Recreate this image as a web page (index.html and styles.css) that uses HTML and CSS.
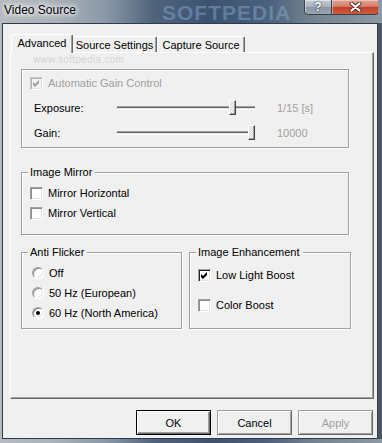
FILE: index.html
```html
<!DOCTYPE html>
<html>
<head>
<meta charset="utf-8">
<title>Video Source</title>
<link rel="stylesheet" href="styles.css">
</head>
<body>
<div class="window">
  <div class="titlebar">
    <span class="title">Video Source</span>
    <span class="wm-title">SOFTPEDIA</span>
    <div class="caption">
      <div class="cap-btn cap-help">?</div>
      <div class="cap-btn cap-close">
        <svg width="13" height="10" viewBox="0 0 13 10"><path d="M2.5 1.5 L10.5 8.5 M10.5 1.5 L2.5 8.5" stroke="#4a2a24" stroke-width="4" stroke-linecap="round" fill="none"/><path d="M2.5 1.5 L10.5 8.5 M10.5 1.5 L2.5 8.5" stroke="#fff" stroke-width="2.2" stroke-linecap="round" fill="none"/></svg>
      </div>
    </div>
  </div>
  <div class="client">
    <div class="tabs">
      <div class="tab tab-adv active">Advanced</div>
      <div class="tab tab-src">Source Settings</div>
      <div class="tab tab-cap">Capture Source</div>
    </div>
    <div class="panel">
      <span class="wm-url">www.softpedia.com</span>
      <div class="group g-gain">
        <div class="check-row disabled">
          <span class="cb disabled"><svg width="11" height="11" viewBox="0 0 11 11"><path d="M2 4 L4 6 L8 2 L8 5 L4 9 L2 7 Z" fill="#a0a0a0"/></svg></span>
          <span>Automatic Gain Control</span>
        </div>
        <div class="slider-row">
          <span class="s-label">Exposure:</span>
          <div class="slider"><div class="track"></div><div class="thumb" style="left:112px"></div></div>
          <span class="s-value">1/15 [s]</span>
        </div>
        <div class="slider-row">
          <span class="s-label">Gain:</span>
          <div class="slider"><div class="track"></div><div class="thumb" style="left:131px"></div></div>
          <span class="s-value">10000</span>
        </div>
      </div>
      <div class="group g-mirror">
        <span class="legend">Image Mirror</span>
        <div class="check-row first"><span class="cb"></span><span>Mirror Horizontal</span></div>
        <div class="check-row second"><span class="cb"></span><span>Mirror Vertical</span></div>
      </div>
      <div class="group-row">
        <div class="group g-flicker">
          <span class="legend">Anti Flicker</span>
          <div class="radio-row"><span class="rb"></span><span>Off</span></div>
          <div class="radio-row"><span class="rb"></span><span>50 Hz (European)</span></div>
          <div class="radio-row"><span class="rb on"></span><span>60 Hz (North America)</span></div>
        </div>
        <div class="group g-enh">
          <span class="legend">Image Enhancement</span>
          <div class="check-row first"><span class="cb checked"><svg width="11" height="11" viewBox="0 0 11 11"><path d="M2 4 L4 6 L8 2 L8 5 L4 9 L2 7 Z" fill="#000"/></svg></span><span>Low Light Boost</span></div>
          <div class="check-row second"><span class="cb"></span><span>Color Boost</span></div>
        </div>
      </div>
    </div>
    <div class="buttons">
      <div class="btn default">OK</div>
      <div class="btn">Cancel</div>
      <div class="btn disabled">Apply</div>
    </div>
  </div>
</div>
</body>
</html>
```

FILE: styles.css
```css
* { box-sizing: border-box; }
html, body { margin: 0; padding: 0; }
body {
  width: 382px;
  height: 443px;
  overflow: hidden;
  font-family: "Liberation Sans", Arial, sans-serif;
  font-size: 11px;
  color: #000;
}

.window {
  width: 382px;
  height: 443px;
  display: flex;
  flex-direction: column;
  padding: 0 4px 4px 2px;
  background: linear-gradient(90deg, #b6bbc0 0%, #aab1b8 14%, #8998a7 28%, #50637b 40%, #3c5370 55%, #4a617b 70%, #74838f 82%, #8d99a5 100%);
}

/* title bar */
.titlebar {
  height: 23px;
  flex: none;
  display: flex;
  align-items: flex-start;
  position: relative;
  overflow: hidden;
}
.title {
  margin: 3px 0 0 2px;
  font-size: 12px;
  line-height: 14px;
  color: #000;
  text-shadow: 0 0 4px #fff, 0 0 6px #fff, 0 0 8px rgba(255,255,255,.8);
  position: relative;
  z-index: 1;
}
.wm-title {
  position: absolute;
  left: 160px;
  top: 2px;
  font-size: 21px;
  font-weight: bold;
  letter-spacing: 1px;
  line-height: 21px;
  color: rgba(140, 175, 215, 0.45);
}
.caption {
  margin-left: auto;
  margin-right: -1px;
  margin-top: -1px;
  display: flex;
  position: relative;
  z-index: 1;
}
.cap-btn {
  height: 16px;
  display: flex;
  align-items: center;
  justify-content: center;
  border: 1px solid #36404c;
}
.cap-help {
  width: 28px;
  border-radius: 0 0 0 4px;
  background: linear-gradient(#c3cad2 0%, #a8b2bd 48%, #8b97a5 52%, #9aa6b3 100%);
  box-shadow: inset 1px 1px 0 rgba(255,255,255,.5);
  color: #fff;
  font-weight: bold;
  font-size: 12px;
  text-shadow: 0 0 2px #2a3440, 0 0 1px #2a3440;
}
.cap-close {
  width: 47px;
  border-left: none;
  border-radius: 0 0 4px 0;
  background: linear-gradient(#e4a393 0%, #d6806d 45%, #c2412d 52%, #d05a3c 100%);
  box-shadow: inset 1px 1px 0 rgba(255,255,255,.35);
}

/* client */
.client {
  flex: 1;
  display: flex;
  flex-direction: column;
  background: #f0f0f0;
  border: 1px solid #2d3b4b;
  padding: 10px 3px 3px 7px;
  position: relative;
  overflow: hidden;
  box-shadow: 4px 0 0 #4b5666;
}

/* tabs */
.tabs {
  display: flex;
  align-items: flex-end;
  height: 18px;
  padding-left: 1px;
  flex: none;
}
.tab {
  height: 16px;
  display: flex;
  align-items: center;
  justify-content: center;
  border-top: 1px solid #fff;
  border-left: 1px solid #fff;
  border-right: 1px solid #696969;
  box-shadow: inset -1px 0 0 #a0a0a0;
  border-radius: 2px 2px 0 0;
  background: #f0f0f0;
  white-space: nowrap;
  padding-top: 1px;
}
.tab.active {
  height: 19px;
  margin-bottom: -1px;
  position: relative;
  z-index: 1;
  padding-top: 0;
  padding-bottom: 2px;
}
.tab-adv { width: 62px; }
.tab-src { width: 84px; border-left: none; }
.tab-cap { width: 88px; }

/* panel */
.panel {
  height: 347px;
  flex: none;
  position: relative;
  border-top: 1px solid #fff;
  border-left: 1px solid #fff;
  border-right: 1px solid #696969;
  border-bottom: 1px solid #696969;
  box-shadow: inset -1px -1px 0 #a0a0a0;
  padding: 16px 0 0 10px;
}
.wm-url {
  position: absolute;
  left: 22px;
  top: 1px;
  font-size: 10px;
  letter-spacing: 0.3px;
  color: #d4d4d4;
}

/* group boxes */
.group {
  border: 1px solid #a0a0a0;
  box-shadow: 1px 1px 0 #fff, inset 1px 1px 0 #fff;
  display: flex;
  flex-direction: column;
  align-items: flex-start;
}
.legend {
  margin: -7px 0 0 6px;
  padding: 0 3px 0 2px;
  background: #f0f0f0;
  line-height: 13px;
}
.g-gain { width: 328px; height: 79px; }
.g-mirror { width: 328px; height: 63px; margin-top: 24px; }
.group-row { display: flex; margin-top: 17px; }
.g-flicker { width: 161px; height: 77px; }
.g-enh { width: 162px; height: 77px; margin-left: 7px; }

/* check boxes */
.check-row {
  display: flex;
  align-items: center;
  height: 13px;
  line-height: 13px;
  gap: 5px;
  white-space: nowrap;
}
.g-gain .check-row { margin: 7px 0 0 8px; }
.check-row.disabled { color: #a0a0a0; }
.g-mirror .check-row.first { margin: 8px 0 0 8px; }
.g-mirror .check-row.second { margin: 7px 0 0 8px; }
.g-enh .check-row.first { margin: 10px 0 0 8px; }
.g-enh .check-row.second { margin: 17px 0 0 8px; }

.cb {
  width: 13px;
  height: 13px;
  flex: none;
  display: flex;
  background: #fff;
  border: 1px solid;
  border-color: #a0a0a0 #fff #fff #a0a0a0;
  box-shadow: inset 1px 1px 0 #8c8c8c, inset -1px -1px 0 #e3e3e3;
}
.cb.checked { box-shadow: inset 1px 1px 0 #202020, inset -1px -1px 0 #e3e3e3; }
.cb.disabled {
  background: #f0f0f0;
  border-color: #c8c8c8 #fff #fff #c8c8c8;
  box-shadow: inset 1px 1px 0 #b4b4b4, inset -1px -1px 0 #e3e3e3;
}

/* sliders */
.slider-row {
  display: flex;
  align-items: center;
  height: 15px;
  margin: 10px 0 0 12px;
  white-space: nowrap;
}
.s-label { width: 83px; }
.slider {
  width: 138px;
  height: 15px;
  position: relative;
  display: flex;
  align-items: center;
}
.track {
  width: 100%;
  height: 4px;
  border-top: 1px solid #a0a0a0;
  border-bottom: 1px solid #fff;
  background: linear-gradient(#696969 50%, #e3e3e3 50%);
}
.thumb {
  position: absolute;
  top: 0;
  width: 7px;
  height: 15px;
  border: 1px solid;
  border-color: #fff #404040 #404040 #fff;
  box-shadow: inset -1px -1px 0 #a0a0a0;
  background: repeating-conic-gradient(#fafafa 0 25%, #d4d4d4 0 50%) 0 0 / 2px 2px;
}
.s-value { margin-left: 22px; color: #a0a0a0; }

/* radios */
.radio-row {
  display: flex;
  align-items: center;
  height: 12px;
  line-height: 13px;
  gap: 5px;
  margin: 8px 0 0 10px;
  white-space: nowrap;
}
.rb {
  width: 12px;
  height: 12px;
  flex: none;
  border-radius: 50%;
  background: #fff;
  border: 1px solid;
  border-color: #a0a0a0 #fff #fff #a0a0a0;
  box-shadow: inset 1px 1px 0 #8c8c8c, inset -1px -1px 0 #e3e3e3;
  display: flex;
  align-items: center;
  justify-content: center;
}
.rb.on::after {
  content: "";
  width: 4px;
  height: 4px;
  border-radius: 50%;
  background: #000;
}

/* buttons */
.buttons {
  display: flex;
  justify-content: flex-end;
  gap: 6px;
  margin-top: 11px;
  padding-right: 1px;
  flex: none;
}
.btn {
  width: 75px;
  height: 25px;
  display: flex;
  align-items: center;
  justify-content: center;
  background: #f0f0f0;
  border: 1px solid;
  border-color: #a0a0a0 #696969 #696969 #a0a0a0;
  box-shadow: inset 1px 1px 0 #fff, inset -1px -1px 0 #a0a0a0;
}
.btn.default {
  border-color: #000;
  box-shadow: inset 1px 1px 0 #fff, inset -1px -1px 0 #696969, inset -2px -2px 0 #a0a0a0;
}
.btn.disabled { color: #a0a0a0; }
```
